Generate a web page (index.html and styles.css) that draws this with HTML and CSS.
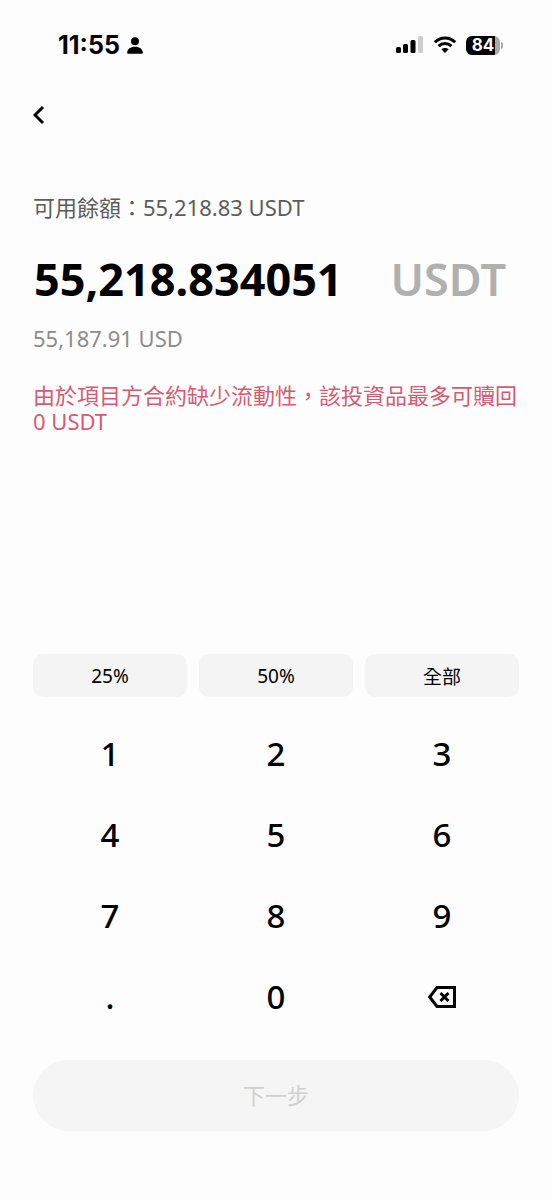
FILE: index.html
```html
<!DOCTYPE html>
<html lang="zh-Hant">
<head>
<meta charset="utf-8">
<meta name="viewport" content="width=device-width, initial-scale=1">
<title>USDT</title>
<link rel="stylesheet" href="styles.css">
</head>
<body>
<div class="screen">
  <header class="status">
    <div class="status-left">
      <span class="time">11:55</span>
      <svg class="person" viewBox="0 0 16 17" width="16" height="17" aria-hidden="true"><circle cx="8" cy="4.2" r="4"/><path d="M.2 15.700C.2 12 3.600 9.800 8 9.800s7.800 2.200 7.800 5.900c0 .7-.4 1.100-1.100 1.100H1.300c-.7 0-1.100-.4-1.100-1.100z"/></svg>
    </div>
    <div class="status-right">
      <svg viewBox="0 0 28 18" width="28" height="18" aria-hidden="true"><rect x="0" y="11" width="5" height="6" rx="1.500"/><rect x="7" y="8" width="5" height="9" rx="1.500"/><rect x="14.500" y="4" width="5" height="13" rx="1.500"/><rect class="dim" x="22" y="0" width="5" height="17" rx="1.500"/></svg>
      <svg viewBox="0 0 24 18" width="24" height="18" aria-hidden="true"><g class="wave"><path d="M1.800 6.300C7.600 .4 16.400 .4 22.200 6.300"/><path d="M5.600 10.200c3.700-3.600 9.100-3.600 12.800 0"/></g><path d="M8.300 13.300c2.200-1.900 5.200-1.900 7.400 0L12 17z"/></svg>
      <div class="battery"><span class="charge">84</span></div>
    </div>
  </header>

  <nav class="nav">
    <button class="back" type="button" aria-label="返回"><svg viewBox="0 0 12 20" width="12" height="20" aria-hidden="true"><path d="M10 2 2 10l8 8"/></svg></button>
  </nav>

  <main class="main">
    <p class="balance">可用餘額：55,218.83 USDT</p>
    <div class="amount-row"><span class="amount">55,218.834051</span><span class="unit">USDT</span></div>
    <p class="fiat">55,187.91 USD</p>
    <p class="warning">由於項目方合約缺少流動性，該投資品最多可贖回 0 USDT</p>
  </main>

  <footer class="pad">
    <div class="grid shares">
      <button class="share" type="button">25%</button>
      <button class="share" type="button">50%</button>
      <button class="share" type="button">全部</button>
    </div>
    <div class="grid keys">
      <button class="key" type="button">1</button>
      <button class="key" type="button">2</button>
      <button class="key" type="button">3</button>
      <button class="key" type="button">4</button>
      <button class="key" type="button">5</button>
      <button class="key" type="button">6</button>
      <button class="key" type="button">7</button>
      <button class="key" type="button">8</button>
      <button class="key" type="button">9</button>
      <button class="key" type="button">.</button>
      <button class="key" type="button">0</button>
      <button class="key" type="button" aria-label="刪除"><svg viewBox="0 0 28 22" width="28" height="22" aria-hidden="true"><path d="M9 1.500H26.500v19H9L1.700 11z"/><path d="m12.500 7 8 8m0-8-8 8"/></svg></button>
    </div>
    <button class="next" type="button" disabled>下一步</button>
  </footer>
</div>
</body>
</html>
```
FILE: styles.css
```css
* { box-sizing: border-box; }

body {
  margin: 0;
  background: #fdfdfd;
  color: #000;
  font-family: "Noto Sans", "Noto Sans CJK TC", sans-serif;
}

p { margin: 0; }

button {
  border: 0;
  padding: 0;
  background: none;
  color: inherit;
  font: inherit;
}

svg { display: block; }

.screen {
  display: flex;
  flex-direction: column;
  min-height: 100vh;
}

.status {
  display: flex;
  justify-content: space-between;
  align-items: center;
  height: 90px;
  padding: 0 49px 0 58px;
}

.status-left {
  display: flex;
  align-items: center;
  gap: 7px;
}

.time {
  font: 700 25px/28px Inter, sans-serif;
}

.status-right {
  display: flex;
  align-items: center;
  gap: 9px;
}

.dim { fill: #ccc; }

.wave {
  fill: none;
  stroke: #000;
  stroke-width: 3;
}

.battery {
  position: relative;
  width: 34px;
  height: 19px;
  border-radius: 6px;
  background: linear-gradient(to right, #000 84%, #aaa 84%);
  margin-right: 3px;
}

.battery::after {
  content: "";
  position: absolute;
  left: 35px;
  top: 6px;
  width: 2px;
  height: 7px;
  border-radius: 0 2px 2px 0;
  background: #aaa;
}

.charge {
  display: block;
  color: #fff;
  font: 700 17px/19px Inter, sans-serif;
  text-align: center;
}

.nav { padding: 0 33px; }

.back {
  display: flex;
  align-items: center;
  width: 44px;
  height: 50px;
}

.back svg, .key svg {
  fill: none;
  stroke: #000;
  stroke-width: 3;
}

.main {
  flex: 1;
  padding: 51px 33px 0;
}

.balance {
  color: #5c5c5c;
  font-size: 22px;
  line-height: 32px;
}

.amount-row {
  display: flex;
  justify-content: space-between;
  padding: 26px 13px 0 1px;
  font-size: 45px;
  font-weight: 700;
  line-height: 60px;
}

.unit {
  color: #b0b0b0;
  font-weight: 600;
}

.fiat {
  margin-top: 13px;
  color: #8c8c8c;
  font-size: 22px;
  line-height: 32px;
}

.warning {
  margin-top: 28px;
  color: #d65a72;
  font-size: 22px;
  line-height: 26px;
}

.pad { padding: 0 33px 69px; }

.grid {
  display: grid;
  grid-template-columns: repeat(3, 1fr);
  column-gap: 12px;
}

.share {
  height: 43px;
  border-radius: 10px;
  background: #f4f4f4;
  font-size: 19px;
}

.keys { margin: 16px 0 23px; }

.key {
  display: flex;
  align-items: center;
  justify-content: center;
  height: 81px;
  font-size: 33px;
  font-weight: 500;
}

.next {
  display: block;
  width: 100%;
  height: 71px;
  padding-bottom: 3px;
  border-radius: 36px;
  background: #f5f5f5;
  color: #d0d0d0;
  font-size: 22px;
}
```
